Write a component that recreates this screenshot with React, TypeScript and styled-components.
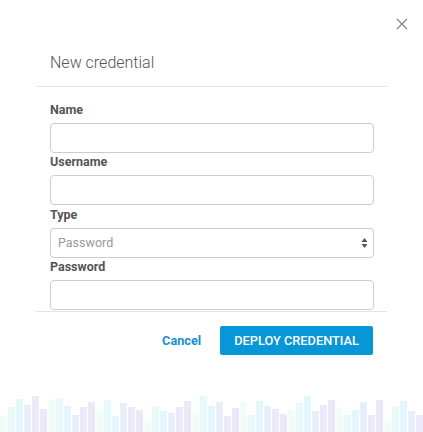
import React from "react"
import styled, { createGlobalStyle } from "styled-components"

const GlobalStyle = createGlobalStyle`
  html, body {
    margin: 0;
    padding: 0;
    background: #fff;
  }
  * {
    box-sizing: border-box;
  }
`

const Page = styled.div`
  position: relative;
  width: 423px;
  height: 432px;
  display: flex;
  flex-direction: column;
  overflow: hidden;
  font-family: Roboto, "Liberation Sans", sans-serif;
  background: #fff;
`

const CloseButton = styled.button`
  position: absolute;
  top: 18px;
  left: 396px;
  width: 12px;
  height: 12px;
  padding: 0;
  border: 0;
  background: none;
  cursor: pointer;
  display: flex;
`

const Header = styled.div`
  padding: 53px 50px 13px;
`

const Title = styled.h2`
  margin: 0;
  font-size: 16px;
  line-height: 20px;
  font-weight: 300;
  color: #555;
`

const Divider = styled.div`
  margin: 0 36px;
  border-top: 1px solid #e4e4e4;
`

const Body = styled.div`
  padding: 15px 49px 0 50px;
  display: flex;
  flex-direction: column;
`

const Field = styled.div`
  display: flex;
  flex-direction: column;
  margin-bottom: 1.33px;
`

const Label = styled.label`
  font-size: 12.5px;
  line-height: 16px;
  font-weight: 700;
  color: #555;
  margin-bottom: 5px;
`

const Input = styled.input`
  height: 30px;
  width: 100%;
  border: 1px solid #ccc;
  border-radius: 4px;
  background: #fff;
  padding: 0 8px;
  font-family: inherit;
  font-size: 12px;
  color: #555;
  outline: none;
`

const SelectBox = styled.div`
  position: relative;
  height: 30px;
  border: 1px solid #ccc;
  border-radius: 4px;
  display: flex;
  align-items: center;
  justify-content: space-between;
  padding: 0 5px 0 7px;
  font-size: 12.5px;
  color: #999;
`

const Footer = styled.div`
  display: flex;
  justify-content: flex-end;
  align-items: center;
  padding: 14px 50px 0 0;
`

const CancelButton = styled.button`
  border: 0;
  background: none;
  padding: 0;
  margin-right: 19px;
  font-family: inherit;
  font-size: 12.7px;
  font-weight: 700;
  color: #1a8fd0;
  cursor: pointer;
`

const PrimaryButton = styled.button`
  height: 29px;
  padding: 0 14px;
  border: 0;
  border-radius: 2px;
  background: #0796d6;
  color: #fff;
  font-family: inherit;
  font-size: 12.8px;
  font-weight: 500;
  text-transform: uppercase;
  cursor: pointer;
`

const Spacer = styled.div`
  flex: 1;
`

const BarRow = styled.div`
  height: 36px;
  display: flex;
  align-items: flex-end;
  gap: 1px;
`

const Bar = styled.div<{ $color: string }>`
  flex: 0 0 7px;
  background: ${(p) => p.$color};
`

const barColors = ["#f1fdf7", "#e6fafb", "#e3f6fc", "#e7edfb", "#ebe9fa", "#ece8f9"]

const barTops = [
  416, 407, 399, 405, 396, 409, 400, 398, 406, 415, 407, 402, 409, 400, 416, 403, 407, 410,
  421, 406, 411, 413, 407, 401, 411, 396, 406, 402, 416, 408, 402, 415, 401, 406, 409,
  414, 410, 403, 396, 411, 405, 400, 407, 415, 410, 402, 415, 400, 421, 406, 401, 411, 415,
]

const Arrows = () => (
  <svg width="7" height="12" viewBox="0 0 7 12">
    <path d="M3.5 1 L6.5 5 L0.5 5 Z" fill="#555" />
    <path d="M3.5 11 L6.5 7 L0.5 7 Z" fill="#555" />
  </svg>
)

const App = () => {
  return (
    <Page>
      <GlobalStyle />
      <CloseButton aria-label="Close">
        <svg width="12" height="12" viewBox="0 0 12 12">
          <path d="M1 1 L11 11 M11 1 L1 11" stroke="#808080" strokeWidth="1.1" fill="none" />
        </svg>
      </CloseButton>
      <Header>
        <Title>New credential</Title>
      </Header>
      <Divider />
      <Body>
        <Field>
          <Label>Name</Label>
          <Input />
        </Field>
        <Field>
          <Label>Username</Label>
          <Input />
        </Field>
        <Field>
          <Label>Type</Label>
          <SelectBox>
            <span>Password</span>
            <Arrows />
          </SelectBox>
        </Field>
        <Field>
          <Label>Password</Label>
          <Input type="password" />
        </Field>
      </Body>
      <Divider />
      <Footer>
        <CancelButton>Cancel</CancelButton>
        <PrimaryButton>Deploy credential</PrimaryButton>
      </Footer>
      <Spacer />
      <BarRow>
        {barTops.map((top, i) => (
          <Bar key={i} $color={barColors[i % 6]} style={{ height: 432 - top }} />
        ))}
      </BarRow>
    </Page>
  )
}

export default App
